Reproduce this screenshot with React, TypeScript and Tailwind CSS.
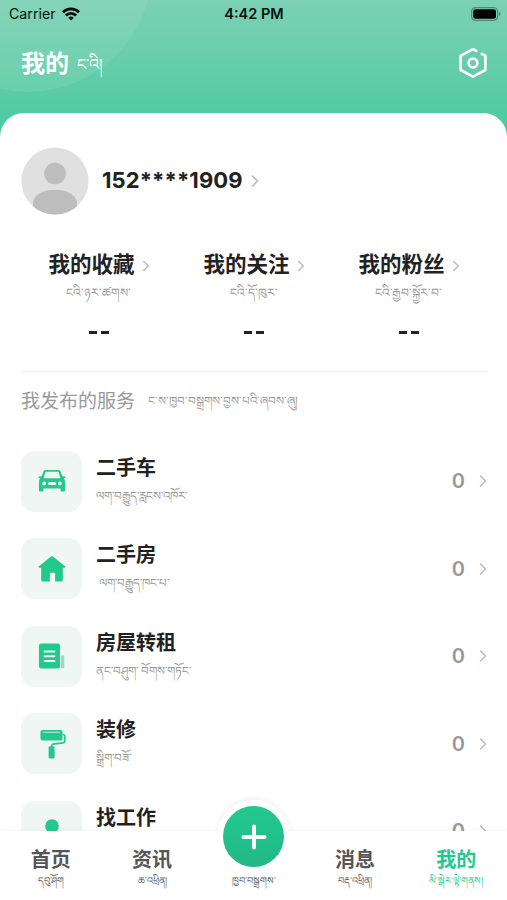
import React from 'react';
import { ChevronRight } from 'lucide-react';

// --- Type Definitions ---

interface Stat {
    title: string;
    sub: string;
}

interface Service {
    title: string;
    sub?: string;
    subClass?: string;
    icon: React.ReactNode;
}

interface Tab {
    title: string;
    sub: string;
    active?: boolean;
}

// --- Icons ---

const WifiIcon = () => (
    <svg className="h-[14px] w-[18px]" viewBox="0 0 18 14" fill="none" stroke="#050a08" strokeWidth="2.8">
        <path d="M1 5.2a11.4 11.4 0 0116 0" />
        <path d="M3.9 8.5a7.2 7.2 0 0110.2 0" />
        <path d="M9 13.6L6.2 10.8a4 4 0 015.6 0z" fill="#050a08" stroke="none" />
    </svg>
);

const BatteryIcon = () => (
    <svg className="h-[14px] w-[30px]" viewBox="0 0 30 14">
        <rect x="0.6" y="0.6" width="26" height="12.8" rx="4" fill="none" stroke="#4d8a75" strokeWidth="1.2" />
        <rect x="2.2" y="2.2" width="22.8" height="9.6" rx="2.4" fill="#000" />
        <path d="M28 4.8c2 .8 2 3.6 0 4.4z" fill="#4d8a75" />
    </svg>
);

const SettingsIcon = () => (
    <svg className="h-[32px] w-[28px]" viewBox="0 0 28 32" fill="none" stroke="#fff" strokeWidth="2.6" strokeLinecap="round" strokeLinejoin="round">
        <path d="M17.4 4L14 2.2 1.6 8.8v14.2L14 29.6l12.4-6.6V8.8L22.8 6.8" />
        <circle cx="14" cy="16" r="4.4" />
    </svg>
);

const Avatar = () => (
    <svg className="h-[68px] w-[68px]" viewBox="0 0 68 68">
        <clipPath id="avatar">
            <circle cx="34" cy="34" r="33.6" />
        </clipPath>
        <g clipPath="url(#avatar)">
            <rect width="68" height="68" fill="#e0e0e0" />
            <circle cx="34" cy="26.5" r="10.8" fill="#bdbdbd" />
            <path d="M12 68V56c0-7 9-13.2 22-13.2S56 49 56 56v12z" fill="#bdbdbd" />
        </g>
    </svg>
);

const CarIcon = () => (
    <svg className="h-[24px] w-[28px]" viewBox="0 0 28 24">
        <path
            fill="#22c98d"
            fillRule="evenodd"
            d="M7.5 1h13c1 0 1.8.6 2.1 1.5L24.3 7.3l2.7.2c.8.3.7 1.2 0 1.4l-1.2.3c.8.9 1.2 2 1.2 3.1v9.2c0 .6-.4 1-1 1h-2.4c-.6 0-1-.4-1-1v-2H5.4v2c0 .6-.4 1-1 1H2c-.6 0-1-.4-1-1v-9.2c0-1.1.4-2.2 1.2-3.1L1 8.9c-.7-.2-.8-1.1 0-1.4l2.7-.2 1.7-4.8C5.7 1.6 6.5 1 7.5 1zM8.2 2.8c-.5 0-.8.2-1 .7L5.7 9.3h16.6l-1.5-5.8c-.2-.5-.5-.7-1-.7zM6.2 12.6a1.9 1.9 0 100 3.8 1.9 1.9 0 000-3.8zm15.6 0a1.9 1.9 0 100 3.8 1.9 1.9 0 000-3.8zM11.4 13a1.5 1.5 0 000 3h5.2a1.5 1.5 0 000-3z"
        />
    </svg>
);

const HouseIcon = () => (
    <svg className="h-[26px] w-[28px]" viewBox="0 0 28 26">
        <path
            fill="#22c98d"
            d="M13 .6c.6-.5 1.4-.5 2 0L27 10.2c.7.6.4 1.5-.5 1.5h-1.7v12.2c0 .9-.7 1.6-1.6 1.6h-6.1v-7.7c0-.6-.4-1-1-1h-3.2c-.6 0-1 .4-1 1v7.7H4.8c-.9 0-1.6-.7-1.6-1.6V11.7H1.5c-.9 0-1.2-.9-.5-1.5z"
        />
    </svg>
);

const DocumentIcon = () => (
    <svg className="h-[26px] w-[28px]" viewBox="0 0 28 26">
        <rect x="1" y="0.5" width="21" height="25" rx="2" fill="#22c98d" />
        <path d="M6.5 8.5h10M6.5 13.2h10M6.5 18h10" stroke="#eff9f6" strokeWidth="1.9" strokeLinecap="round" />
        <path d="M23 12.5h2.3c.6 0 1 .4 1 1V25H23z" fill="#92dfc4" />
    </svg>
);

const RollerIcon = () => (
    <svg className="h-[30px] w-[28px]" viewBox="0 0 28 30" fill="none">
        <rect x="2.500" y="1" width="22" height="10.6" rx="1.8" fill="#22c98d" />
        <path d="M5 3.3h17" stroke="#a5e7d0" strokeWidth="1.3" />
        <path d="M24.5 5.8h1c.8 0 1.3.5 1.3 1.3v4.6c0 1.3-.7 2-2 2.200l-9.700 1.200c-1 .1-1.500.7-1.500 1.600v1" stroke="#22c98d" strokeWidth="1.600" />
        <rect x="10.600" y="17.200" width="6" height="12.300" rx="1.300" fill="#22c98d" />
    </svg>
);

const PersonIcon = () => (
    <svg className="h-[28px] w-[28px]" viewBox="0 0 28 28" fill="#22c98d">
        <circle cx="14" cy="9" r="6.8" />
        <path d="M2 27c0-7 5-10 12-10s12 3 12 10z" />
    </svg>
);

// --- Data ---

const stats: Stat[] = [
    { title: '我的收藏', sub: 'ངའི་ཉར་ཚགས་' },
    { title: '我的关注', sub: 'ངའི་དོ་ཁུར་' },
    { title: '我的粉丝', sub: 'ངའི་རྒྱབ་སྐྱོར་བ་' },
];

const services: Service[] = [
    { title: '二手车', sub: 'ལག་བརྒྱུད་རླངས་འཁོར་', icon: <CarIcon /> },
    { title: '二手房', sub: 'ལག་བརྒྱུད་ཁང་པ་', subClass: 'ml-[3px]', icon: <HouseIcon /> },
    { title: '房屋转租', sub: 'ནང་བཤུག་ བོགས་གཏོང་', icon: <DocumentIcon /> },
    { title: '装修', sub: 'སྒྲིག་བཟོ་', icon: <RollerIcon /> },
    { title: '找工作', icon: <PersonIcon /> },
];

const tabs: Tab[] = [
    { title: '首页', sub: 'དབུ་ཤོག' },
    { title: '资讯', sub: 'ཆ་འཕྲིན།' },
    { title: '', sub: 'ཁྱབ་བསྒྲགས་' },
    { title: '消息', sub: 'བརྡ་འཕྲིན།' },
    { title: '我的', sub: 'མི་སྒེར་ལྟེ་གནས།', active: true },
];

// --- Sections ---

const StatusBar = () => (
    <div className="grid h-[28px] grid-cols-3 items-center pr-[6px] pl-[9px] text-[#06120d]">
        <div className="flex items-center gap-[6px] text-[14.2px]">
            Carrier
            <WifiIcon />
        </div>
        <div className="pr-[2px] text-center text-[14.5px] font-semibold whitespace-nowrap">4:42 PM</div>
        <div className="flex justify-end">
            <BatteryIcon />
        </div>
    </div>
);

const StatColumn = ({ title, sub }: Stat) => (
    <div className="flex w-[155px] flex-col items-center">
        <div className="flex h-[32px] items-center pl-[6px] text-[21.5px] font-bold whitespace-nowrap text-[#222]">
            {title}
            <ChevronRight className="mt-[3px] ml-[2px] h-[18px] w-[18px] shrink-0 text-[#bbb]" strokeWidth={2} />
        </div>
        <div className="h-[24px] pt-px text-[12.2px] leading-[24px] whitespace-nowrap text-[#999]">{sub}</div>
        <div className="mt-[16px] flex h-[24px] items-center gap-[4px]">
            <span className="h-[3px] w-[8px] bg-[#222]" />
            <span className="h-[3px] w-[8px] bg-[#222]" />
        </div>
    </div>
);

const ServiceRow = ({ title, sub, subClass, icon }: Service) => (
    <div className="flex h-[87.6px] items-start">
        <div className="flex h-[61px] w-[61px] shrink-0 items-center justify-center rounded-[14px] bg-[#eff6f4]">{icon}</div>
        <div className="ml-[14px] flex-1 pt-px">
            <div className="h-[31px] text-[20px] leading-[33px] font-bold text-[#222]">{title}</div>
            {sub && (
                <div className={`h-[26px] text-[11.8px] leading-[26px] whitespace-nowrap text-[#999] ${subClass ?? ''}`}>{sub}</div>
            )}
        </div>
        <div className="flex h-[61px] items-center text-[20px] font-semibold text-[#999]">
            0
            <ChevronRight className="mr-[-4px] ml-[8px] h-[20px] w-[20px] text-[#bbb]" strokeWidth={1.8} />
        </div>
    </div>
);

const TabItem = ({ title, sub, active }: Tab) => (
    <div className={`flex flex-1 flex-col items-center pt-[14px] ${active ? 'text-[#22c98d]' : 'text-[#555]'}`}>
        <div className="h-[28px] text-[20px] leading-[30px] font-bold">{title}</div>
        <div className="h-[20px] text-[9.7px] leading-[16px] whitespace-nowrap">{sub}</div>
    </div>
);

// --- Main Component ---

const App: React.FC = () => (
    <div className="relative h-[900px] w-[507px] overflow-hidden bg-white font-[Inter,'Noto_Sans_CJK_SC',sans-serif]">
        <header className="relative h-[140px] overflow-hidden bg-linear-to-b from-[#7bd1b4] to-[#46c99d]">
            <div className="absolute top-[-156px] left-[-96px] h-[248px] w-[248px] rounded-full bg-white/8" />
            <div className="relative">
                <StatusBar />
                <div className="flex h-[70px] items-center pr-[20px] pl-[21px] text-white">
                    <h1 className="pt-[2px] text-[24px] font-bold">我的</h1>
                    <span className="ml-[8px] pt-[2px] text-[16px]">ང་འི།</span>
                    <span className="ml-auto">
                        <SettingsIcon />
                    </span>
                </div>
            </div>
        </header>

        <main className="relative mt-[-27px] rounded-t-[24px] bg-white pt-[34px] pr-[18px] pl-[21px]">
            <div className="flex h-[68px] items-center">
                <Avatar />
                <span className="ml-[13px] pb-[2px] text-[22px] font-bold tracking-[0.1px] text-[#222]">152****1909</span>
                <ChevronRight className="ml-[2px] h-[20px] w-[20px] text-[#bbb]" strokeWidth={2} />
            </div>

            <div className="mt-[33px] flex justify-center pr-[3px]">
                {stats.map((stat) => (
                    <StatColumn key={stat.title} {...stat} />
                ))}
            </div>

            <div className="mt-[27px] flex h-[58px] items-center border-t border-[#f2f2f2] text-[#999]">
                <span className="pt-[3px] text-[19px]">我发布的服务</span>
                <span className="ml-[13px] pt-px text-[11.9px] whitespace-nowrap">ང་ས་ཁྱབ་བསྒྲགས་བྱས་པའི་ཞབས་ཞུ།</span>
            </div>

            <div className="mt-[21.5px]">
                {services.map((service) => (
                    <ServiceRow key={service.title} {...service} />
                ))}
            </div>
        </main>

        <nav className="absolute inset-x-0 bottom-0 h-[69px] bg-white shadow-[0_-1px_4px_rgba(0,0,0,0.04)]">
            <div className="absolute top-[-31px] left-[217px] h-[73px] w-[73px] rounded-full bg-white shadow-[0_-2px_5px_rgba(0,0,0,0.06)]" />
            <div className="relative flex h-full bg-white">
                {tabs.map((tab) => (
                    <TabItem key={tab.sub} {...tab} />
                ))}
            </div>
            <button className="absolute top-[-31px] left-[217px] flex h-[73px] w-[73px] items-center justify-center rounded-full bg-white">
                <span className="flex h-[61px] w-[61px] items-center justify-center rounded-full bg-linear-to-b from-[#22c98f] to-[#21b886]">
                    <svg className="h-[28px] w-[28px]" viewBox="0 0 28 28" stroke="#fff" strokeWidth="4" strokeLinecap="round">
                        <path d="M14 3.5v21M3.5 14h21" />
                    </svg>
                </span>
            </button>
        </nav>
    </div>
);

export default App;
